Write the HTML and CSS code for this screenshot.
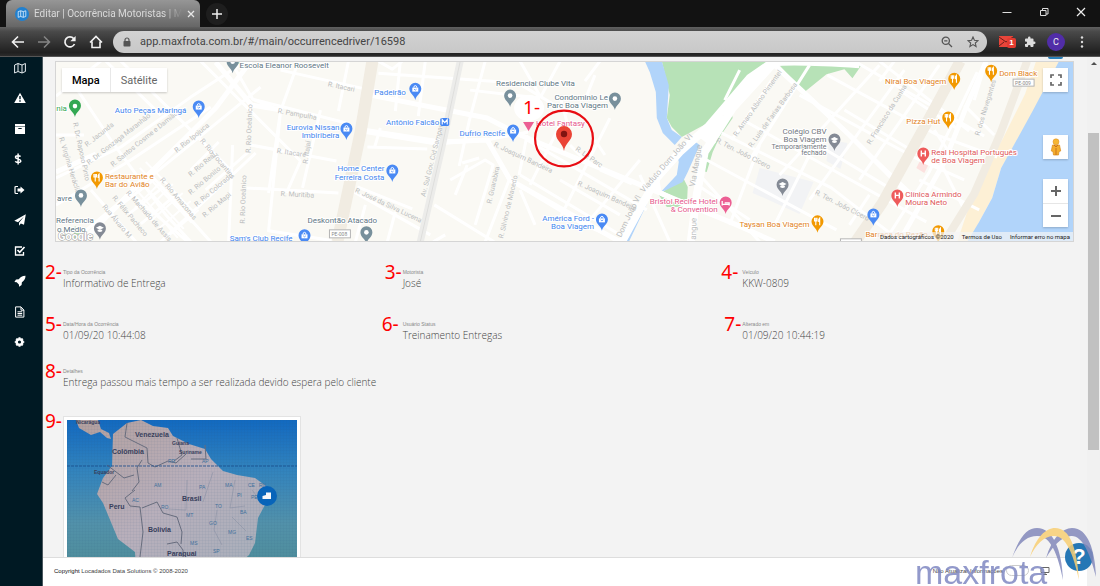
FILE: index.html
```html
<!DOCTYPE html>
<html lang="pt-BR">
<head>
<meta charset="utf-8">
<title>Editar | Ocorrência Motoristas | Maxfrota</title>
<link rel="stylesheet" href="styles.css">
</head>
<body>
<header class="browser">
  <div class="titlebar">
    <div class="tab">
      <svg class="favicon" viewBox="0 0 14 14"><circle cx="7" cy="7" r="7" fill="#2180cf"/><path d="M3.2 4.6 5.7 3.8v5.7l-2.5.8zM5.7 3.8l2.6.8v5.7l-2.6-.8M8.3 4.6l2.5-.8v5.7l-2.5.8" fill="none" stroke="#cfe6fa" stroke-width=".9"/></svg>
      <span class="tab-title">Editar | Ocorrência Motoristas | M</span>
      <button class="icon-btn tab-close" aria-label="Fechar guia"><svg viewBox="0 0 8 8"><path d="M1 1l6 6M7 1 1 7" stroke="#e8e8e8" stroke-width="1.3"/></svg></button>
    </div>
    <button class="icon-btn new-tab" aria-label="Nova guia"><svg viewBox="0 0 10 10"><path d="M5 0v10M0 5h10" stroke="#eee" stroke-width="1.5"/></svg></button>
    <div class="window-buttons">
      <button class="icon-btn" aria-label="Minimizar"><svg viewBox="0 0 10 10"><path d="M.5 5.5h9" stroke="#ddd"/></svg></button>
      <button class="icon-btn" aria-label="Restaurar"><svg viewBox="0 0 10 10"><path d="M1.5 3.5h5.500v5h-5.500zM3.500 3.500v-2h5.500v5.500h-2" fill="none" stroke="#ddd"/></svg></button>
      <button class="icon-btn" aria-label="Fechar"><svg viewBox="0 0 10 10"><path d="M1 1l8 8M9 1 1 9" stroke="#eee" stroke-width="1.2"/></svg></button>
    </div>
  </div>
  <div class="toolbar">
    <div class="nav-buttons">
      <button class="icon-btn" aria-label="Voltar"><svg viewBox="0 0 14 14"><path d="M13 7H2M7 1.500 1.500 7 7 12.500" fill="none" stroke="#f2f2f2" stroke-width="1.600"/></svg></button>
      <button class="icon-btn" aria-label="Avançar"><svg viewBox="0 0 14 14"><path d="M1 7h11M7 1.500 12.500 7 7 12.500" fill="none" stroke="#858585" stroke-width="1.500"/></svg></button>
      <button class="icon-btn" aria-label="Recarregar"><svg viewBox="0 0 14 14"><path d="M11.500 9A5 5 0 1 1 10.700 3.600" fill="none" stroke="#f2f2f2" stroke-width="1.700"/><path d="M12.600 1v5.300H7.300z" fill="#f2f2f2"/></svg></button>
      <button class="icon-btn" aria-label="Página inicial"><svg viewBox="0 0 14 14"><path d="M1 7.500 7 1.500l6 6M3 6.500v6h8v-6" fill="none" stroke="#f2f2f2" stroke-width="1.600"/></svg></button>
    </div>
    <div class="omnibox">
      <svg class="lock" viewBox="0 0 8 10"><path d="M2 4.500V3a2 2 0 0 1 4 0v1.500" fill="none" stroke="#555" stroke-width="1.200"/><rect x=".5" y="4" width="7" height="5.500" rx=".8" fill="#555"/></svg>
      <input class="url" type="text" aria-label="Endereço" value="app.maxfrota.com.br/#/main/occurrencedriver/16598">
      <button class="icon-btn" aria-label="Zoom"><svg viewBox="0 0 12 12"><circle cx="4.800" cy="4.800" r="3.600" fill="none" stroke="#555" stroke-width="1.300"/><path d="M7.500 7.500 11 11M3.200 4.800h3.200" stroke="#555" stroke-width="1.300"/></svg></button>
      <button class="icon-btn" aria-label="Favoritar"><svg viewBox="0 0 12 12"><path d="m6 1 1.400 3.300 3.600.3-2.700 2.400.8 3.500L6 8.600l-3.100 1.900.8-3.500L1 4.600l3.600-.3z" fill="none" stroke="#555" stroke-width="1.100"/></svg></button>
    </div>
    <div class="extensions">
      <button class="icon-btn mail" aria-label="E-mail"><svg viewBox="0 0 14 11"><path d="M0 0h14v11H0z" fill="#e8453a"/><path d="M0 1l7 5 7-5M0 10l5-4M14 10 9 6" fill="none" stroke="#5a1a16" stroke-width=".9"/></svg><span class="badge">1</span></button>
      <button class="icon-btn" aria-label="Extensões"><svg viewBox="0 0 24 24"><path fill="#ddd" d="M20.500 11H19V7a2 2 0 0 0-2-2h-4V3.500a2.500 2.500 0 0 0-5 0V5H4a2 2 0 0 0-2 2v3.800h1.500a2.700 2.700 0 0 1 0 5.400H2V20a2 2 0 0 0 2 2h3.800v-1.500a2.700 2.700 0 0 1 5.400 0V22H17a2 2 0 0 0 2-2v-4h1.500a2.500 2.500 0 0 0 0-5z"/></svg></button>
      <button class="avatar" aria-label="Perfil">C</button>
      <button class="icon-btn" aria-label="Menu"><svg viewBox="0 0 12 12"><g fill="#ddd"><circle cx="6" cy="1.500" r="1.200"/><circle cx="6" cy="6" r="1.200"/><circle cx="6" cy="10.500" r="1.200"/></g></svg></button>
    </div>
  </div>
</header>

<div class="app">
  <nav class="sidebar">
    <a href="#mapa" aria-label="Mapa"><svg viewBox="0 0 12 12"><path d="M.6 3 4 1.500v8L.6 11zM4 1.500 8 3v8L4 9.500M8 3l3.400-1.500v8L8 11" fill="none" stroke="#e6ecef"/></svg></a>
    <a href="#alertas" aria-label="Alertas"><svg viewBox="0 0 12 12"><path fill="#fff" d="M6 .8 11.800 11H.2z"/><path d="M6 4v3.200M6 8.300v1.400" stroke="#001a25" stroke-width="1.400"/></svg></a>
    <a href="#arquivo" aria-label="Arquivo"><svg viewBox="0 0 12 12"><path fill="#fff" d="M1 1h10v2.400H1zM1 3.900h10V11H1z"/><path d="M4.300 5.500h3.400" stroke="#001a25"/></svg></a>
    <a href="#custos" aria-label="Custos"><svg viewBox="0 0 12 12"><path d="M6.500 3.600C6 2.600 1.500 2.200 1.500 4.300S6.800 5.900 6.800 8 2 9.700 1.300 8.200M4.100.6v11" fill="none" stroke="#fff" stroke-width="1.500"/></svg></a>
    <a href="#saida" aria-label="Saída"><svg viewBox="0 0 12 12"><path d="M4 2.500H2q-1 0-1 1v5q0 1 1 1h2" fill="none" stroke="#fff" stroke-width="1.200"/><path fill="#fff" d="M3.500 4.500h3V2.500L10.500 6 6.500 9.500v-2h-3z"/></svg></a>
    <a href="#mensagens" aria-label="Mensagens"><svg viewBox="0 0 12 12"><path fill="#fff" d="M11.800.3 10 10.800 6.800 9.500 5 11.700V8.800L10 2.500 4 8.200.3 6.800z"/></svg></a>
    <a href="#tarefas" aria-label="Tarefas"><svg viewBox="0 0 12 12"><path d="M9.500 7v3h-8V2H8" fill="none" stroke="#fff" stroke-width="1.300"/><path d="m3.500 5 2.200 2.300L10.500 2" fill="none" stroke="#fff" stroke-width="1.700"/></svg></a>
    <a href="#viagens" aria-label="Viagens"><svg viewBox="0 0 12 12"><path fill="#fff" d="M11.500.8C8 .8 6.500 2 4.800 4.200L2 4.500.4 7l2.300.2 2.200 2.200.2 2.300 2.500-1.600.3-2.800C10.200 5.600 11.500 4 11.500.8z"/></svg></a>
    <a href="#relatorios" aria-label="Relatórios"><svg viewBox="0 0 12 12"><path d="M1.600.9H7l2.900 3.200v7H1.600zM7 1v3.200h3M3.500 5.800h4.700M3.500 7.500h4.700M3.500 9.200h4.700" fill="none" stroke="#fff"/></svg></a>
    <a href="#ajustes" aria-label="Ajustes"><svg viewBox="0 0 12 12"><circle cx="5.500" cy="6" r="2.800" fill="none" stroke="#fff" stroke-width="2.400"/><path d="M5.500 1.300v1M5.500 9.700v1M.8 6h1M9.200 6h1M2.200 2.700l.7.7M8.100 8.600l.7.7M8.800 2.700l-.7.700M2.900 8.600l-.7.700" stroke="#fff" stroke-width="2"/></svg></a>
  </nav>

  <div class="page">
    <span class="top-bubble"></span>
    <main class="content">
      <section class="map">
        <svg class="map-canvas" viewBox="55 61 1019 181" preserveAspectRatio="xMidYMid slice" role="img" aria-label="Mapa da ocorrência">
          <defs>
            <g id="pin"><path d="M0 11C-1 6-6 4.500-6-.5a6 6 0 0 1 12 0C6 4.500 1 6 0 11z"/></g>
            <g id="bag"><use href="#pin" fill="#4a8af4"/><path d="M-3-1.500h6V2.500h-6z" fill="#fff"/><path d="M-1.500-1.500q0-2 1.500-2t1.500 2" fill="none" stroke="#fff"/><path d="M-1.300 0q1.300 2 2.600 0" fill="none" stroke="#4a8af4" stroke-width=".8"/></g>
            <g id="food"><use href="#pin" fill="#f29900"/><path d="M-3-4v3h2.500v-3M-1.700-4v7.500M2.200 3.500V-4q-1.500 1-1 4" fill="none" stroke="#fff" stroke-width="1.100"/></g>
            <g id="dot"><use href="#pin" fill="#78909c"/><circle r="2.300" cy="-.5" fill="#fff"/></g>
            <g id="school"><use href="#pin" fill="#848a95"/><path d="M-4-1 0-3l4 2-4 2zM-2.300.8v1.500q2.300 1.500 4.600 0V.8" fill="#fff"/></g>
            <g id="hosp"><use href="#pin" fill="#ee5b5b"/><path d="M-2-3.500v6M2-3.500v6M-2-.5h4" stroke="#fff" stroke-width="1.400"/></g>
          </defs>
          <rect x="-400" y="-200" width="2000" height="700" fill="#faf9f4"/>
          <path fill="#b7e2b7" d="M662 61h108L708 123l-26 14-10-10-5-9 3-23zM777 62h75l10 3-9 13-8-9-18 5-22 18zM683 177l5 10-1 20h-20l-8-12zM732 113l1 5-13 19-7 15-6 20-4-1 5-21 8-20zM232 61h13l-4 8zM74 226l6 10-8 4z"/>
          <path fill="#b1d4fa" d="M645 61h17l7 24-2 33 5 12 10 7-7 8-12-12-6-15-1-26-6-20zM677 153l16-13 7 5-12 27-5 10-23 11 17-18 2-13zM644 201l3 3-18 38h-7z"/>
          <path fill="#fdf0d5" d="M1037 61h24l-27 51-32 56-9 30-13 24-10 20h-12l18-54 28-50 22-44z"/>
          <path fill="#b1d4fa" d="M1060 61h14v181H968l12-20 13-24 9-30 31-56z"/>
          <path fill="#f2f3f5" d="m760 168 54 14-14 32-47-21zM830 140l18 3-7 26-14-8z"/>
          <path fill="#fce1df" d="m921 160 8 5-4 8-8-5z"/>
          <g fill="none" stroke="#fff" stroke-width="3" stroke-linejoin="round">
            <path d="M55 178 120 147 190 97 245 61M55 205 130 160 210 107M83 232 130 193 260 87M160 242 255 153M120 61 180 120 230 170M70 80 110 140 165 215 190 242M90 190 135 242M105 61 160 115M55 96 100 61M132 195l55 47M150 175l60 67M55 135l28 0M200 61l100 100M230 61l22 38 28 12-12 120 65 10M252 99l94 24M250 145l86 16M246 188l92 5M232 145l-4 97M280 70l90 20M298 61l-18 50-12 82M320 110l-18 78M348 61l-10 50M300 161l-14 32M120 205l34-26M128 214l35-27M140 224l34-28M190 170l28-28M205 190l45-40"/>
            <path stroke-width="2" d="M127 180l50 58M133 174l50 55M139 168l52 55M145 162l50 52M134 208l30-30M142 214l30-30M150 221l32-28M158 229l32-28M168 236l30-26"/>
            <path d="M378 61l14 8 10-8M400 61l-5 50M425 61l-7 55M378 73l140 10 50 30M362 132l74 12 50-4 42-8M367 147l60 2M380 128l-6 20M485 61l-16 60-10 45M470 90l70 8M350 190l80 45M357 187l55 22M365 205l-10 37M395 212l-8 30M445 235l-12 7M450 180l35-20 8 5-18 60M462 163l17-5M434 205l60 37M455 195l12-30M487 140l22 40 75 45 40 17M509 180l-24 62M520 190l15 35M527 135l-8 40M520 175l100 60M527 140l120 70M560 125l-30 60M610 118l-50 100M640 160l-60 72M600 170l32 14M560 180l60 35M520 61l20 35M560 61l-20 37M585 100l10-25M570 145l15 15M640 175l30 67M560 96l8 30M595 140l10 15M600 61l-15 20"/>
            <path d="M722 133l110 55 70 54M707 160l130 70M747 122l90 50 90 50M800 95l120 65 45 20M770 61l150 140M828 75l110 60 60 22M880 61l90 70M732 140l40-60M750 160l60-95M780 175l100-110M810 200l95-130M775 225l40-80M700 175l60 67M860 180l80-115M850 225l20-30M690 180l60 40M920 180l60 30M740 70l-15 30M760 145l-30 80M885 242l45-70 48-100M895 61l-15 20M855 61l130 75M845 110l100 60M810 140l100 60M900 90l60 40M935 130l20 30M965 105l30 30M975 100l12-39M940 160l25 50"/>
            <path stroke-width="5" d="M370 95 487 118 520 135 660 193 737 225 775 242M362 130 440 142 487 140 510 180 620 242M55 172l40-18M83 240 130 192 215 108 250 61M215 62l36 43 30 5M900 242l45-80 20-50 22-51M775 65l75 70 60 60"/>
            <path stroke-width="8" d="M860 64Q800 60 773 62L750 78 708 127 680 152 657 178 622 242M775 62 733 108 705 152 697 195 691 242M703 140q12-15 20-24"/>
            <path stroke-width="5" d="m657 178 2 14 40 20M700 155l15-15"/>
          </g>
          <g fill="none" stroke="#f1ece2">
            <path stroke-width="12" d="m372 61-12 72-23 109"/>
            <path stroke-width="11" d="m961 61-31 57-47 85-27 39"/>
            <path stroke-width="8" d="m1028 61-27 73-26 60-30 48"/>
          </g>
          <path d="m460 61-18 85-22 96" fill="none" stroke="#ececea" stroke-width="7"/>
          <path d="m460 61-18 85-22 96" fill="none" stroke="#dededc"/>
          <g class="street">
            <text transform="translate(86 147) rotate(-38)">R. Jacunda</text>
            <text transform="translate(88 165) rotate(-38)">R. Dr. Gonzaga Maranhão</text>
            <text transform="translate(112 167) rotate(-39)">R. Santos Cosme e Damião</text>
            <text transform="translate(176 153) rotate(-39)">R. Rio Ipojuca</text>
            <text transform="translate(199 141) rotate(50)">R. Rio Tocantins</text>
            <text transform="translate(190 177) rotate(-40)">R. Rio Real</text>
            <text transform="translate(190 195) rotate(-40)">R. Rio Bonito</text>
            <text transform="translate(196 207) rotate(-40)">R. Rio Colorado</text>
            <text transform="translate(204 218) rotate(-40)">R. Rio Mapi</text>
            <text transform="translate(159 180) rotate(50)">R. Rio Amazonas</text>
            <text transform="translate(125 193) rotate(49)">R. Machado de Assis</text>
            <text transform="translate(111 198) rotate(50)">R. Félix Pacheco</text>
            <text transform="translate(101 207) rotate(50)">Rua Álvaro M</text>
            <text transform="translate(58 138) rotate(73)">R. Virgínia Heráclio</text>
            <text transform="translate(72 123) rotate(78)">R. Dr. Raposo Pinto</text>
            <text transform="translate(250 153) rotate(-88)">R. Rio Oceânico</text>
            <text transform="translate(244 224) rotate(-88)">R. Rio Oceânico</text>
            <text transform="translate(327 86) rotate(12)">R. Itacari</text>
            <text transform="translate(277 113) rotate(10)">R. Pampulha</text>
            <text transform="translate(276 153) rotate(8)">R. Itacaré</text>
            <text transform="translate(307 164) rotate(-82)">R. Itajaí</text>
            <text transform="translate(280 196) rotate(3)">R. Muritiba</text>
            <text transform="translate(354 192) rotate(25)">R. José da Silva Lucena</text>
            <text transform="translate(425 197) rotate(-76)">Av. Sul Gov. Cid Sampaio</text>
            <text transform="translate(493 146) rotate(25)">R. Joaquim Bandeira</text>
            <text transform="translate(491 204) rotate(-77)">R. Guarabira</text>
            <text transform="translate(503 239) rotate(-77)">R. Silvino de Macedo</text>
            <text transform="translate(575 150) rotate(35)">R. Le Parc</text>
            <text transform="translate(577 185) rotate(24)">R. Joaquim Bandeira</text>
            <text transform="translate(737 137) rotate(-55)">R. Amaro Albino Pimentel</text>
            <text transform="translate(752 148) rotate(-54)">R. Luis de Farias Barbosa</text>
            <text transform="translate(716 142) rotate(27)">R. Ten. João Cícero</text>
            <text transform="translate(815 194) rotate(27)">R. Ten. João Cícero</text>
            <text transform="translate(871 145) rotate(-58)">R. Francisco da Cunha</text>
            <text transform="translate(980 136) rotate(-73)">R. dos Navegantes</text>
          </g>
          <g class="street avenue">
            <text transform="translate(644 193) rotate(-49)">Viaduto Dom João VI</text>
            <text transform="translate(621 238) rotate(-64)">Dom João VI</text>
            <text transform="translate(695 187) rotate(-80)">Via Mangue</text>
            <text transform="translate(696 240) rotate(-88)">angue</text>
          </g>
          <g class="shield"><rect x="329" y="230" width="21" height="8"/><rect x="1014" y="79" width="21" height="7"/><rect x="841" y="239" width="21" height="7"/><text x="331" y="236">PE-008</text><text x="1016" y="85">PE-009</text></g>
          <g class="poi">
            <g fill="#5f7784">
              <text x="239" y="68">Escola Eleanor Roosevelt</text><text x="496" y="86">Residencial Clube Vita</text>
              <text x="608" y="100" text-anchor="end">Condominio Le</text><text x="608" y="108" text-anchor="end">Parc Boa Viagem</text>
              <text x="307" y="223">Deskontão Atacado</text><text x="56" y="201">avre</text><text x="55" y="223">Referencia</text><text x="56" y="232">o Medio</text>
            </g>
            <g fill="#727780"><text x="827" y="134" text-anchor="end">Colégio CBV</text><text x="827" y="142" text-anchor="end">Boa Viagem</text><text class="small" x="827" y="149" text-anchor="end">Temporariamente</text><text class="small" x="827" y="155" text-anchor="end">fechado</text></g>
            <g fill="#4285ee">
              <text x="114" y="113">Auto Peças Maringá</text><text x="374" y="95">Padeirão</text><text x="439" y="125" text-anchor="end">Antônio Falcão</text>
              <text x="339" y="130" text-anchor="end">Eurovia Nissan</text><text x="339" y="138" text-anchor="end">Imbiribeira</text>
              <text x="384" y="171" text-anchor="end">Home Center</text><text x="384" y="180" text-anchor="end">Ferreira Costa</text>
              <text x="505" y="136" text-anchor="end">Dufrio Recife</text><text x="594" y="221" text-anchor="end">América Ford -</text><text x="594" y="229" text-anchor="end">Boa Viagem</text>
              <text x="229" y="241">Sam's Club Recife</text>
            </g>
            <g fill="#e28423"><text x="104" y="179">Restaurante e</text><text x="104" y="187">Bar do Avião</text><text x="947" y="84" text-anchor="end">Nirai Boa Viagem</text><text x="941" y="124" text-anchor="end">Pizza Hut</text><text x="1000" y="76">Dom Black</text><text x="810" y="227" text-anchor="end">Taysan Boa Viagem</text><text x="866" y="237">Barraca do Pezão</text></g>
            <g fill="#e5578b"><text x="536" y="126">Hotel Fantasy</text><text x="718" y="204" text-anchor="end">Bristol Recife Hotel</text><text x="718" y="212" text-anchor="end">&amp; Convention</text></g>
            <g fill="#e05858"><text x="932" y="155">Real Hospital Português</text><text x="932" y="163">de Boa Viagem</text><text x="906" y="197">Clínica Armindo</text><text x="906" y="205">Moura Neto</text></g>
            <text fill="#34a853" x="66" y="111" text-anchor="end">nia</text>
          </g>
          <use href="#bag" x="198" y="107"/><use href="#bag" x="415" y="89"/><use href="#bag" x="346" y="129"/><use href="#bag" x="392" y="171"/><use href="#bag" x="513" y="131"/><use href="#bag" x="602" y="220"/><use href="#bag" x="304" y="236"/><use href="#bag" x="874" y="215"/>
          <use href="#food" x="96" y="178"/><use href="#food" x="955" y="79"/><use href="#food" x="949" y="118"/><use href="#food" x="992" y="71"/><use href="#food" x="818" y="222"/><use href="#food" x="939" y="232"/>
          <use href="#dot" x="232" y="62"/><use href="#dot" x="510" y="96"/><use href="#dot" x="615" y="99"/><use href="#dot" x="366" y="233"/><use href="#dot" x="80" y="196"/>
          <use href="#school" x="99" y="229"/><use href="#school" x="835" y="140"/><use href="#school" x="783" y="185"/>
          <use href="#hosp" x="924" y="154"/><use href="#hosp" x="898" y="196"/>
          <g transform="translate(74 106)"><use href="#pin" fill="#34a853"/><circle r="2.300" fill="#fff"/></g>
          <g transform="translate(726 203)"><use href="#pin" fill="#ec5f93"/><path d="M-3.500-2v4.500M-3.500 1.500h7v1M-1 0h4.500v1.500" stroke="#fff" fill="none" stroke-width="1.300"/></g>
          <rect x="440" y="118" width="9" height="8" rx="1.500" fill="#4285f4"/><path d="M442 124.500v-5l2.500 3 2.500-3v5" fill="none" stroke="#fff" stroke-width="1.100"/>
          <path d="M523 122h11l-5.500 9z" fill="#ec5f93"/>
          <ellipse cx="529" cy="108" rx="15" ry="13" fill="#fff"/>
          <path d="M564 151c-1-8-8-10-8-17a8 8 0 0 1 16 0c0 7-7 9-8 17z" fill="#ea4335"/><circle cx="564" cy="134" r="3.200" fill="#811411"/>
          <ellipse cx="564" cy="138.500" rx="29" ry="28" fill="none" stroke="#e80c12" stroke-width="2.200"/>
          <text class="note-text" x="523" y="114">1-</text>
          <text class="google" x="57" y="240">Google</text>
        </svg>
        <div class="map-type"><button class="on">Mapa</button><button>Satélite</button></div>
        <div class="map-tools">
          <button class="tool" aria-label="Tela cheia"><svg viewBox="0 0 12 12"><path d="M1 4V1h3M8 1h3v3M11 8v3H8M4 11H1V8" fill="none" stroke="#666" stroke-width="1.700"/></svg></button>
          <button class="tool person" aria-label="Street View"><svg viewBox="0 0 12 18"><path d="M2.500 7h7l1.200 6-1.700.5L8.500 17h-5L3 13.500 1.300 13z" fill="#f5ae2c" stroke="#d98b20" stroke-width=".7"/><circle cx="6" cy="3.800" r="3" fill="#f7b733" stroke="#d98b20" stroke-width=".5"/><path d="M6 10v7M4 7l2 2 2-2" stroke="#c9731c" fill="none"/></svg></button>
          <div class="zoom"><button class="tool" aria-label="Aumentar zoom"><svg viewBox="0 0 12 12"><path d="M6 1v10M1 6h10" stroke="#666" stroke-width="2"/></svg></button><button class="tool" aria-label="Diminuir zoom"><svg viewBox="0 0 12 12"><path d="M1 6h10" stroke="#666" stroke-width="2"/></svg></button></div>
        </div>
        <div class="map-legal"><span>Dados cartográficos ©2020</span><a href="#termos">Termos de Uso</a><a href="#erro">Informar erro no mapa</a></div>
      </section>

      <dl class="fields">
        <div class="field"><span class="note">2-</span><dt>Tipo da Ocorrência</dt><dd>Informativo de Entrega</dd></div>
        <div class="field"><span class="note">3-</span><dt>Motorista</dt><dd>José</dd></div>
        <div class="field"><span class="note wide">4-</span><dt>Veículo</dt><dd>KKW-0809</dd></div>
        <div class="field"><span class="note">5-</span><dt>Data/Hora da Ocorrência</dt><dd>01/09/20 10:44:08</dd></div>
        <div class="field"><span class="note wide">6-</span><dt>Usuário Status</dt><dd>Treinamento Entregas</dd></div>
        <div class="field"><span class="note">7-</span><dt>Alterado em</dt><dd>01/09/20 10:44:19</dd></div>
        <div class="field details"><span class="note">8-</span><dt>Detalhes</dt><dd>Entrega passou mais tempo a ser realizada devido espera pelo cliente</dd></div>
      </dl>

      <figure class="photo">
        <span class="note">9-</span>
        <svg viewBox="0 0 230 172" role="img" aria-label="Foto anexada">
          <defs>
            <linearGradient id="sea" x1="0" y1="0" x2="0" y2="1"><stop offset="0" stop-color="#1269c0"/><stop offset=".3" stop-color="#3384bd"/><stop offset=".6" stop-color="#5291aa"/><stop offset="1" stop-color="#4d8b90"/></linearGradient>
            <linearGradient id="land" x1="0" y1="0" x2="1" y2="1"><stop offset="0" stop-color="#b39f9d"/><stop offset=".5" stop-color="#b8afbb"/><stop offset="1" stop-color="#a5afbb"/></linearGradient>
            <pattern id="mesh" width="3" height="3" patternUnits="userSpaceOnUse"><path d="M0 0h3M0 0v3" stroke="#1e466e" stroke-opacity=".1"/></pattern>
          </defs>
          <rect width="230" height="172" fill="url(#sea)"/>
          <path fill="url(#land)" d="M9 0h22l3 9 8 4 2 6-4-1-7-6-9 3-12-7zM46 14l14-11 14-3 12 6 15 2 5 8 16 8 16 5 6 10 12 12 14 4 18 3 11 8 1 15-9 17-3 25-6 12-11 10-8 15H70l-2-28-17-13-15-36-6-9 6-16 9-12z"/>
          <path d="m60 3-2 14 10 5 12 6 1 15 7 4 13-6 8 2 10-9M110 18l5 17-8 6M75 40l-5 8 2 14-7 9M40 45l17 13 10-3M35 62l6 3 8-10M68 70l-10 8 5 8 10 1 3 25-3 25M75 88l15-6 6 11 14 4 5 15-1 12M100 124l10-2 6 8 0 7M138 25l1 14-15 0" fill="none" stroke="#6a6e7e"/>
          <path d="M120 60l-1 30-18-1M146 52l-10 30M168 60l-5 28 15-2M150 90l-3 20 8 15M165 97l14 14M185 70l8 10" fill="none" stroke="#8f93a6" stroke-width=".6"/>
          <path d="M0 46h230" stroke="#174a8b" stroke-width=".8" stroke-dasharray="3 1"/>
          <rect width="230" height="172" fill="url(#mesh)"/>
          <g class="country"><text class="mini" x="9" y="4">Nicarágua</text><text x="68" y="17">Venezuela</text><text x="45" y="34">Colômbia</text><text class="mini" x="105" y="25">Guiana</text><text class="mini" x="112" y="34">Suriname</text><text class="mini" x="27" y="54">Equador</text><text x="115" y="81">Brasil</text><text x="42" y="89">Peru</text><text x="81" y="112">Bolívia</text><text x="100" y="136">Paraguai</text></g>
          <g class="state"><text x="101" y="43">RR</text><text x="135" y="43">AP</text><text x="87" y="67">AM</text><text x="132" y="69">PA</text><text x="158" y="67">MA</text><text x="181" y="67">CE</text><text x="192" y="67">RN</text><text x="65" y="82">AC</text><text x="94" y="89">RO</text><text x="119" y="97">MT</text><text x="148" y="88">TO</text><text x="170" y="77">PI</text><text x="173" y="94">BA</text><text x="142" y="105">GO</text><text x="161" y="114">MG</text><text x="179" y="120">ES</text><text x="123" y="125">MS</text><text x="146" y="133">SP</text><text x="184" y="79">PE</text></g>
          <circle cx="200" cy="76" r="10" fill="#0864b9"/><path d="M195.500 79v-3l3.500-1v-2.500h5V79z" fill="#f5f6f8"/>
        </svg>
      </figure>
    </main>
    <footer class="footer">
      <p><b>Copyright</b> Locadados Data Solutions © 2008-2020</p>
      <label class="refresh"><span>Não Atualizar Informações</span><input type="checkbox"><svg viewBox="0 0 10 8"><path d="M1 .5h8v5H1zM3 7.500h4M5 5.500v2" fill="none" stroke="#666"/></svg></label>
    </footer>
    <button class="help" aria-label="Ajuda">?</button>
    <div class="brand">
      <svg viewBox="0 0 84 54"><path fill="#8389bb" d="M0 30C8 7 16 0 25 0c16 0 25 22 26 52C46 26 38 7 25 8 14 8 6 16 0 30zM34 30C40 10 50 0 60 0c16 0 23 22 24 49C78 25 70 7 59 8c-10 1-18 10-25 22z"/><path fill="#f8cf74" d="M18 29C24 9 34 0 43 0c15 0 22 20 24 52C61 25 54 8 42 8c-10 0-18 8-24 21z"/></svg>
      <span>maxfrota</span>
    </div>
  </div>
  <div class="scrollbar"><span class="arrow"></span><span class="thumb"></span></div>
</div>
</body>
</html>
```

FILE: styles.css
```css
* { box-sizing: border-box; }
html, body { height: 100%; }
body {
  margin: 0;
  display: flex;
  flex-direction: column;
  overflow: hidden;
  background: #f3f3f3;
  font-family: "Open Sans", "Noto Sans", sans-serif;
}
button { border: 0; padding: 0; background: none; font: inherit; }
svg { display: block; }
a { color: inherit; text-decoration: none; }

.browser { flex: none; background: #121212; }
.titlebar { display: flex; height: 27px; padding-left: 6px; }
.tab {
  display: flex;
  align-items: center;
  gap: 5px;
  width: 194px;
  padding: 0 9px;
  border-radius: 6px 6px 0 0;
  background: linear-gradient(#969696, #666);
}
.favicon { flex: none; width: 14px; height: 14px; }
.tab-title {
  flex: 1;
  white-space: nowrap;
  font-family: Roboto, sans-serif;
  font-size: 10px;
  color: #d9d9d9;
  -webkit-mask-image: linear-gradient(90deg, #000 88%, transparent);
  mask-image: linear-gradient(90deg, #000 88%, transparent);
}
.icon-btn { display: flex; align-items: center; justify-content: center; position: relative; }
.icon-btn svg { width: 12px; height: 12px; }
.tab-close svg { width: 8px; height: 8px; }
.new-tab { width: 22px; height: 22px; margin: 3px 0 0 6px; border-radius: 50%; background: #1e1e1e; }
.new-tab svg { width: 10px; height: 10px; }
.window-buttons { display: flex; gap: 27px; margin-left: auto; padding-right: 14px; height: 23px; }
.window-buttons svg { width: 10px; height: 10px; }
.toolbar {
  display: flex;
  align-items: center;
  height: 30px;
  padding: 0 12px 0 11px;
  background: linear-gradient(#606060, #4a4a4a 15%, #202020 88%, #2b2b2b);
  border-bottom: 1px solid #555;
}
.nav-buttons { display: flex; gap: 12px; margin-right: 10px; }
.nav-buttons svg { width: 14px; height: 14px; }
.omnibox {
  display: flex;
  flex: 1;
  align-items: center;
  gap: 14px;
  height: 22px;
  padding: 0 8px 0 10px;
  border-radius: 11px;
  background: linear-gradient(#d2d2d2, #c8c8c8);
}
.lock { width: 8px; height: 10px; }
.url {
  flex: 1;
  min-width: 0;
  margin-left: -5px;
  padding: 0;
  border: 0;
  outline: 0;
  background: none;
  font: 11px Roboto, sans-serif;
  color: #444;
}
.extensions { display: flex; align-items: center; gap: 11px; margin-left: 12px; }
.mail svg { width: 14px; height: 11px; }
.badge {
  position: absolute;
  left: 8px;
  top: 2px;
  width: 9px;
  height: 10px;
  border-radius: 2px;
  background: #e23b31;
  color: #fff;
  font: bold 8px/10px "Liberation Sans", sans-serif;
}
.avatar { width: 18px; height: 18px; border-radius: 50%; background: #512da8; color: #eee; font: 9px/18px Roboto, sans-serif; }

.app { display: flex; flex: 1; min-height: 0; }
.sidebar {
  display: flex;
  flex: none;
  flex-direction: column;
  gap: 18px;
  width: 43px;
  padding: 5px 0 0 14px;
  background: #001923;
  border-right: 1px solid #4a575e;
}
.sidebar svg { width: 12px; height: 12px; }
.sidebar a:nth-child(even) { margin-bottom: 1px; }
.page { position: relative; display: flex; flex: 1; min-width: 0; flex-direction: column; }
.content { flex: 1; min-height: 0; overflow: hidden; padding: 4px 13px 0 12px; }
.top-bubble { position: absolute; top: 0; right: 24px; width: 15px; height: 2px; border-radius: 0 0 8px 8px; background: #2b80b9; }

.map { position: relative; height: 181px; overflow: hidden; border: 1px solid #d5d5d5; }
.map-canvas { width: 100%; height: 100%; }
.street { font: 7px Roboto, sans-serif; fill: #bcbec0; }
.avenue { font-size: 8px; }
.poi { font: 8px Roboto, sans-serif; stroke: #fff; stroke-width: 2px; stroke-linejoin: round; paint-order: stroke; }
.poi .small { font-size: 7px; }
.shield { fill: #fff; stroke: #b5b5b5; stroke-width: 1px; }
.shield text { font: 5px Roboto, sans-serif; fill: #888; stroke: none; }
.google { font: bold 11px Roboto, sans-serif; fill: #fff; stroke: #999; stroke-width: 1px; paint-order: stroke; }
.note-text { font: 19px "Noto Sans", sans-serif; fill: #f00; }
.map-type {
  position: absolute;
  left: 6px;
  top: 6px;
  display: flex;
  background: #fff;
  box-shadow: 0 1px 2px #0003;
  font: 11px Roboto, sans-serif;
}
.map-type button { height: 24px; padding: 0 10px; color: #666; }
.map-type .on { border-right: 1px solid #e8e8e8; color: #000; font-weight: 500; }
.map-tools { position: absolute; right: 5px; top: 6px; display: flex; flex-direction: column; }
.tool { display: flex; align-items: center; justify-content: center; width: 25px; height: 24px; background: #fff; box-shadow: 0 1px 2px #0003; }
.tool svg { width: 12px; height: 12px; }
.person { margin: 43px 0 20px; }
.person svg { width: 12px; height: 18px; }
.zoom { background: #fff; box-shadow: 0 1px 2px #0003; }
.zoom .tool { box-shadow: none; }
.zoom .tool + .tool { border-top: 1px solid #e6e6e6; }
.map-legal {
  position: absolute;
  right: 0;
  bottom: 0;
  display: flex;
  gap: 8px;
  padding: 0 3px;
  background: #f5f5f5b0;
  font: 6px/9px Roboto, sans-serif;
  color: #222;
}

.fields { display: grid; grid-template-columns: repeat(3, 1fr); row-gap: 28px; margin: 27px 0 0; }
.field { position: relative; padding-left: 8px; }
.details { grid-column: 1 / -1; margin-top: -5px; }
dt { font: 5px/7px "Liberation Sans", sans-serif; color: #888; }
dd { margin: 0; font-size: 10px; font-weight: 300; line-height: 15px; padding-bottom: 2px; color: #444; }
.note { position: absolute; left: -10px; top: -7px; font: 19px/20px "Noto Sans", sans-serif; color: #f00; }
.note.wide { left: -13px; }

.photo { position: relative; width: 238px; margin: 24px 0 0 8px; padding: 3px; border: 1px solid #e3e3e3; background: #fff; }
.photo svg { width: 100%; }
.photo .note { left: -19px; top: -6px; }
.country { font: bold 7px "Liberation Sans", sans-serif; fill: #38405c; }
.country .mini { font-size: 5px; }
.state { font: 5px "Liberation Sans", sans-serif; fill: #42719c; }

.footer {
  display: flex;
  flex: none;
  align-items: center;
  justify-content: space-between;
  height: 29px;
  padding: 0 37px 3px 11px;
  border-top: 1px solid #ddd;
  background: #fff;
  font: 6px "Liberation Sans", sans-serif;
  color: #444;
}
.footer p { margin: 0; }
.footer b { font-weight: 400; color: #111; }
.refresh { display: flex; align-items: center; gap: 3px; }
.refresh input { appearance: none; width: 23px; height: 11px; margin: 0; border: 1px solid #ccc; border-radius: 6px; background: #fff; }
.refresh svg { width: 10px; height: 8px; margin-left: 8px; }
.help {
  position: absolute;
  right: -6px;
  bottom: 15px;
  width: 28px;
  height: 28px;
  border-radius: 50%;
  background: #2577b5;
  color: #fff;
  font: bold 22px/28px "Liberation Sans", sans-serif;
}
.brand { position: absolute; right: -9px; bottom: -3px; width: 181px; opacity: .85; pointer-events: none; }
.brand svg { width: 84px; height: 54px; margin: 0 0 -27px 97px; }
.brand span { display: block; font: 34px/34px "Liberation Sans", sans-serif; color: #7f88c2; }

.scrollbar { flex: none; display: flex; flex-direction: column; align-items: center; width: 13px; background: #f1f1f1; }
.arrow { margin-top: 5px; border: 3px solid transparent; border-top: 0; border-bottom-color: #505050; }
.thumb { width: 11px; height: 60%; margin-top: 68px; background: #c1c1c1; }
```
